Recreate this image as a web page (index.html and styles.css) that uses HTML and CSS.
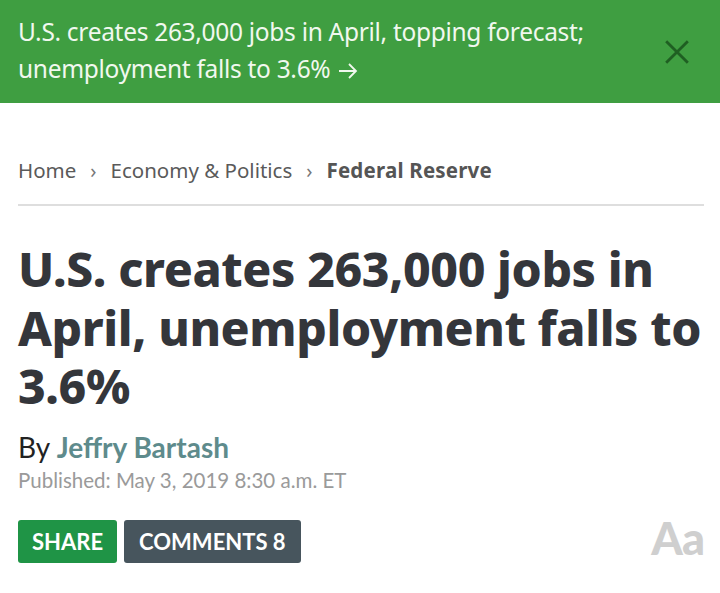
FILE: index.html
```html
<!DOCTYPE html>
<html>
<head>
<meta charset="utf-8">
<link rel="stylesheet" href="styles.css">
</head>
<body>
<div class="banner">
  <div class="banner-text">U.S. creates 263,000 jobs in April, topping forecast; unemployment falls to 3.6% <svg class="arrow" viewBox="0 0 20 16" width="20" height="16"><path d="M1 8 H18 M11 1 L18 8 L11 15" stroke="#f1f8ef" stroke-width="1.8" fill="none"/></svg></div>
  <svg class="close" viewBox="0 0 24 24" width="26" height="26"><path d="M2 2 L22 22 M22 2 L2 22" stroke="#1f5f22" stroke-width="2.6" fill="none"/></svg>
</div>
<div class="content">
  <nav class="crumbs">
    <span class="crumb">Home</span>
    <span class="sep">›</span>
    <span class="crumb">Economy &amp; Politics</span>
    <span class="sep">›</span>
    <span class="crumb current">Federal Reserve</span>
  </nav>
  <h1 class="title">U.S. creates 263,000 jobs in April, unemployment falls to 3.6%</h1>
  <div class="byline">By <span class="author">Jeffry Bartash</span></div>
  <div class="published">Published: May 3, 2019 8:30 a.m. ET</div>
  <div class="actions">
    <span class="btn share">SHARE</span>
    <span class="btn comments">COMMENTS 8</span>
    <span class="aa">Aa</span>
  </div>
</div>
</body>
</html>
```
FILE: styles.css
```css
html, body { margin: 0; padding: 0; background: #fff; }
body { font-family: "Lato", "Noto Sans", sans-serif; }
.banner {
  background: #3f9e41;
  height: 103px;
  display: flex;
  align-items: center;
  padding: 0 30px 0 18px;
  box-sizing: border-box;
}
.banner-text {
  flex: 1;
  color: #f1f8ef;
  font-family: "Noto Sans", sans-serif;
  font-size: 24.5px;
  line-height: 37px;
  letter-spacing: -0.3px;
  padding-right: 50px;
  margin-top: -3px;
}
.arrow { vertical-align: -1px; margin-left: 2px; }
.close { flex: none; }
.content { padding: 0 16px 0 18px; }
.crumbs {
  display: flex;
  align-items: center;
  height: 103px;
  border-bottom: 2px solid #dedede;
  font-family: "Noto Sans", sans-serif;
  font-size: 20.5px;
  color: #5a5a5a;
  padding-top: 33px;
  box-sizing: border-box;
}
.sep { margin: 0 14px; color: #777; font-size: 20px; }
.current { font-weight: bold; color: #555; letter-spacing: 0.2px; }
.title {
  margin: 34px 0 0;
  font-family: "Noto Sans", sans-serif;
  font-weight: 800;
  font-size: 48px;
  line-height: 58.5px;
  color: #34363b;
  letter-spacing: -0.4px;
}
.byline {
  margin-top: 14px;
  font-size: 28px;
  color: #222;
  line-height: 34px;
}
.author { color: #5e8b8c; font-weight: bold; }
.published {
  font-size: 20.5px;
  color: #9a9a9a;
  line-height: 30px;
  margin-top: 1px;
}
.actions {
  display: flex;
  align-items: flex-start;
  margin-top: 25px;
  gap: 7px;
}
.btn {
  color: #fff;
  font-size: 22px;
  font-weight: bold;
  height: 43px;
  line-height: 43px;
  padding: 0 14px;
  border-radius: 3px;
}
.comments { padding: 0 15px 0 15px; }
.share { background: #1f9446; }
.comments { background: #47555d; }
.aa {
  margin-left: auto;
  font-size: 45px;
  line-height: 36px;
  font-weight: 900;
  color: #cfcfcf;
  letter-spacing: -1px;
}
```
